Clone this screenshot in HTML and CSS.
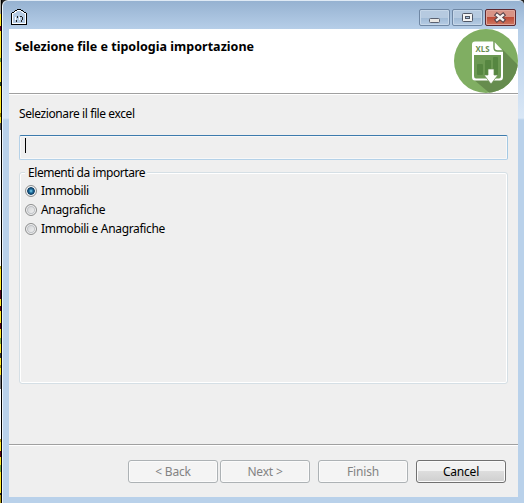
FILE: index.html
```
<!DOCTYPE html>
<html lang="it">
<head>
<meta charset="utf-8">
<title>Selezione file e tipologia importazione</title>
<link rel="stylesheet" href="styles.css">
</head>
<body>
<div class="backdrop"></div>
<div class="window">
  <div class="titlebar">
    <svg class="app-icon" width="18" height="18" viewBox="0 0 18 18" shape-rendering="crispEdges">
      <path d="M1.5 16.5V5.5L4.5 3.5L7.5 1.5H10.5L13.5 3.5L16.5 5.5V16.5Z" fill="#b5cbe3" stroke="#000"/>
      <path d="M2.5 15.5V6L8 2.5H10L15.5 6V15.5Z" fill="none" stroke="#fff"/>
      <path d="M7.5 8v2M6.5 12v2M10 8.5h2M12.5 9v3M11.5 12v2" fill="none" stroke="#222"/>
      <path d="M5.5 9v3M9.5 9v3" stroke="#fff"/>
    </svg>
    <div class="controls">
      <div class="control"><svg width="30" height="16" viewBox="0 0 30 16"><rect x="10.5" y="9.5" width="10" height="4" rx="1" fill="#e9e7e4" stroke="#5a6170"/></svg></div>
      <div class="control"><svg width="30" height="16" viewBox="0 0 30 16"><rect x="10.5" y="4.5" width="10" height="8" rx="1" fill="#f4f4f4" stroke="#505766"/><rect x="13.5" y="7.5" width="4" height="2" fill="#a6c0dc" stroke="#505766"/></svg></div>
      <div class="control close"><svg width="30" height="16" viewBox="0 0 30 16"><path d="M12 6L18 11M18 6L12 11" stroke="#564047" stroke-width="4.4" stroke-linecap="square"/><path d="M12 6L18 11M18 6L12 11" stroke="#f5f2f0" stroke-width="2.3" stroke-linecap="square"/></svg></div>
    </div>
  </div>
  <div class="client">
    <header class="banner">
      <h1>Selezione file e tipologia importazione</h1>
      <svg class="banner-icon" width="64" height="64" viewBox="0 0 64 64">
        <defs><clipPath id="disc"><circle cx="32" cy="32" r="32"/></clipPath></defs>
        <circle cx="32" cy="32" r="32" fill="#80ae62"/>
        <path d="M48 20L67 39V67H39L19 50L40 45Z" fill="#668c4e" clip-path="url(#disc)"/>
        <path d="M21 12.5H40L49 22V48Q49 51.5 46 51.5H21Q18 51.5 18 48V15.5Q18 12.5 21 12.5Z" fill="#fff"/>
        <path d="M20 26H47V47Q47 49.5 45 49.5H22Q20 49.5 20 47Z" fill="#6c9953"/>
        <path d="M40 12V18.5Q40 22 43.5 22H49" fill="none" stroke="#6a9552" stroke-width="1.4"/>
        <g fill="#568641"><rect x="23" y="35" width="6" height="11" rx="1"/><rect x="31" y="31" width="6" height="15" rx="1"/><rect x="39" y="28" width="5" height="18" rx="1"/></g>
        <path d="M34 40H40V46H44L37 55L30 46H34Z" fill="#fff" stroke="#668c4e" stroke-width=".7"/>
        <text class="file-type" x="21.5" y="22.5" textLength="14" lengthAdjust="spacingAndGlyphs">XLS</text>
      </svg>
    </header>
    <main class="content">
      <label class="field-label">Selezionare il file excel</label>
      <div class="field"><i class="caret"></i></div>
      <section class="group">
        <h2>Elementi da importare</h2>
        <div class="option"><i class="radio checked"></i><span>Immobili</span></div>
        <div class="option"><i class="radio"></i><span>Anagrafiche</span></div>
        <div class="option"><i class="radio"></i><span>Immobili e Anagrafiche</span></div>
      </section>
    </main>
    <footer class="actions">
      <div class="button disabled">&lt; Back</div>
      <div class="button disabled next">Next &gt;</div>
      <div class="button disabled finish">Finish</div>
      <div class="button cancel">Cancel</div>
    </footer>
  </div>
</div>
</body>
</html>
```
FILE: styles.css
```
* { box-sizing: border-box; }
body {
  margin: 0;
  width: 524px;
  height: 503px;
  display: flex;
  overflow: hidden;
  background: #222;
  font: 12px/16px "Noto Sans", "Open Sans", sans-serif;
  color: #000;
}
.backdrop {
  width: 2px;
  flex: none;
  border-right: 1px solid #000;
  background: linear-gradient(#a8a8a0 0 14px, #ffe928 14px 26px, #600020 26px 31px, #ffe928 31px 58px, #70a040 58px 62px, #ffe928 62px 82px, #204020 82px 86px, #ffe928 86px 113px, #a08a00 113px 117px, #ffe928 117px 123px, #555 123px 130px, #fff 130px 266px, #b49a10 266px 269px, #ffe928 269px 290px, #500018 290px 299px, #ffe928 299px 306px, #500018 306px 311px, #ffe928 311px 323px, #500018 323px 329px, #ffe928 329px 338px, #80ad45 338px 344px, #ffe928 344px 353px, #333 353px 358px, #ffe928 358px 365px, #a58c10 365px 368px, #ffe928 368px 375px, #777 375px 389px, #fff 389px 439px, #b49a10 439px 442px, #ffe928 442px 451px, #500018 451px 457px, #ffe928 457px 465px, #80ad45 465px 472px, #ffe928 472px 493px, #222 493px 495px, #b49a10 495px);
}
.window {
  flex: 1;
  display: flex;
  flex-direction: column;
  padding: 0 6px 6px;
  border-top: 1px solid #dfeaf5;
  border-left: 1px solid #edf5fc;
  border-radius: 6px 5px 0 0;
  background: linear-gradient(#96b2d1 0, #b6cee8 28px, #d9e7f6 117px, #b9d1ea 119px);
}
.titlebar {
  height: 28px;
  flex: none;
  display: flex;
  justify-content: space-between;
  align-items: flex-start;
}
.app-icon { margin: 7px 0 0 1px; }
.controls { display: flex; gap: 2px; margin: 8px 2px 0 0; }
.control {
  width: 31px;
  height: 17px;
  border: 1px solid #6f87a4;
  border-radius: 2px;
  box-shadow: inset 0 0 0 1px #c6d7e9;
  background: linear-gradient(#b6cae0 50%, #9fb9d5 51%, #b6cce4);
}
.control svg { display: block; margin: -1px 0 0 -1px; }
.control.close {
  border-color: #5e2931;
  box-shadow: inset 0 0 0 1px #dfa69c;
  background: linear-gradient(#d89386 0 45%, #bd4a37 48%, #cf7863);
}
.client {
  flex: 1;
  display: flex;
  flex-direction: column;
  background: #efefef;
}
.banner {
  height: 66px;
  flex: none;
  display: flex;
  justify-content: space-between;
  background: #fff;
  border-bottom: 1px solid #fff;
  box-shadow: inset 0 -1px #a0a0a0;
}
h1, h2 { margin: 0; font-size: 12px; line-height: 16px; }
h1 { padding: 10px 0 0 6px; white-space: nowrap; font-size: 12.5px; letter-spacing: .03px; }
.banner-icon { display: block; }
.file-type { font: bold 9px "Open Sans", sans-serif; fill: #668c4e; }
.content { flex: 1; display: flex; flex-direction: column; padding: 11px 10px 0; }
.field-label { letter-spacing: -.4px; }
.field {
  height: 25px;
  margin-top: 13px;
  padding: 2px 5px;
  border: 1px solid #b4d1e8;
  border-top-color: #3d7bad;
  border-right-color: #a4c9e3;
  border-radius: 2px;
  box-shadow: inset 0 0 0 1px #f8f8f8;
}
.caret { display: block; width: 1px; height: 15px; background: #000; }
.group {
  height: 212px;
  margin-top: 12px;
  padding-left: 5px;
  border: 1px solid #d5dfe5;
  border-radius: 3px;
  box-shadow: inset 0 0 0 1px #fff;
}
h2 {
  width: max-content;
  margin-top: -8px;
  padding: 0 2px 0 3px;
  font-weight: 400;
  background: #efefef;
  letter-spacing: -.43px;
}
.option { display: flex; align-items: center; height: 19px; gap: 4px; letter-spacing: -.33px; }
.option span { line-height: 16px; }
.radio {
  width: 12px;
  height: 12px;
  border: 1px solid #8e8f8f;
  border-radius: 50%;
  box-shadow: inset 0 0 0 1px #f4f4f4, inset 0 0 0 2px #c0c3c7;
  background: linear-gradient(135deg, #c8cacd, #fafafa);
}
.radio.checked {
  box-shadow: inset 0 0 0 1px #f4f4f4;
  background: radial-gradient(circle at 50% 50%, #8edcf5 0, #2c82b0 1.5px, #12446c 3px, #12446c 3.5px, #e3e7ea 4.3px);
}
.actions {
  height: 53px;
  flex: none;
  display: flex;
  justify-content: flex-end;
  padding: 15px 12px 0 0;
  border-top: 1px solid #a0a0a0;
  box-shadow: inset 0 1px #fff;
}
.button {
  width: 90px;
  height: 23px;
  border: 1px solid #707070;
  border-radius: 3px;
  box-shadow: inset 0 0 0 1px #fbfbfb;
  background: linear-gradient(#f2f2f2 0 48%, #dddddd 50%, #cfcfcf);
  line-height: 22px;
  text-align: center;
  letter-spacing: -.2px;
}
.button.disabled { border-color: #adb2b5; background: #f4f4f4; color: #838383; }
.next { margin-left: 2px; }
.finish, .cancel { margin-left: 8px; }
```
